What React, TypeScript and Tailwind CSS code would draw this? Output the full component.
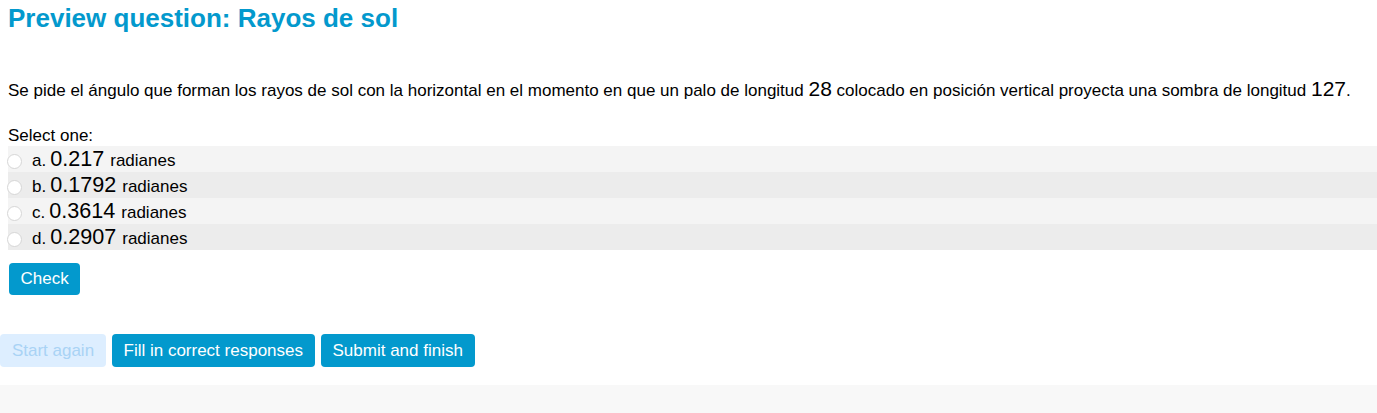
const options = [
  { letter: 'a.', value: '0.217' },
  { letter: 'b.', value: '0.1792' },
  { letter: 'c.', value: '0.3614' },
  { letter: 'd.', value: '0.2907' },
];

const font = { fontFamily: '"Liberation Sans", Arial, sans-serif' };

export default function App() {
  return (
    <div className="min-h-[413px] bg-white text-black" style={font}>
      {/* Heading */}
      <h1 className="px-2 pt-[3px] text-[26px] font-bold leading-[30px] text-[#0399cd]">
        Preview question: Rayos de sol
      </h1>

      {/* Question */}
      <p className="mt-[43px] px-2 text-[17px] leading-[26px]">
        Se pide el ángulo que forman los rayos de sol con la horizontal en el momento en que un palo de
        longitud <span className="text-[21px]">28</span> colocado en posición vertical proyecta una sombra de
        longitud <span className="text-[21px]">127</span>.
      </p>

      <div className="mt-[20px] px-2 pt-[2px] text-[17px] leading-[20px]">Select one:</div>

      {/* Answers */}
      <div className="ml-2">
        {options.map((o, i) => (
          <label
            key={o.letter}
            className={`flex h-[26px] items-center ${i % 2 === 0 ? 'bg-[#f4f4f4]' : 'bg-[#ececec]'}`}
          >
            <span className="-ml-[1px] mt-[4px] h-[15px] w-[15px] rounded-full border border-[#d6d6d6] bg-white" />
            <span className="ml-[10px] mt-[4px] text-[17px]">{o.letter}</span>
            <span className="ml-[4px] text-[21.6px] leading-none">{o.value}</span>
            <span className="ml-[6px] mt-[4px] text-[17px]">radianes</span>
          </label>
        ))}
      </div>

      <div className="px-[9px] pt-[13px]">
        <button className="h-[32px] rounded-[4px] bg-[#0399cd] px-[11.5px] text-[17px] text-white">Check</button>
      </div>

      {/* Controls */}
      <div className="mt-[39px] flex gap-[6px]">
        <button className="h-[33px] w-[106px] rounded-[4px] bg-[#ddeeff] text-[17px] text-[#a9d3f5]">
          Start again
        </button>
        <button className="h-[33px] rounded-[4px] bg-[#0399cd] px-[11.5px] text-[17px] text-white">
          Fill in correct responses
        </button>
        <button className="h-[33px] rounded-[4px] bg-[#0399cd] px-[12px] text-[17px] text-white">
          Submit and finish
        </button>
      </div>

      <div className="mt-[18px] h-[28px] bg-[#f8f8f8]" />
    </div>
  );
}
